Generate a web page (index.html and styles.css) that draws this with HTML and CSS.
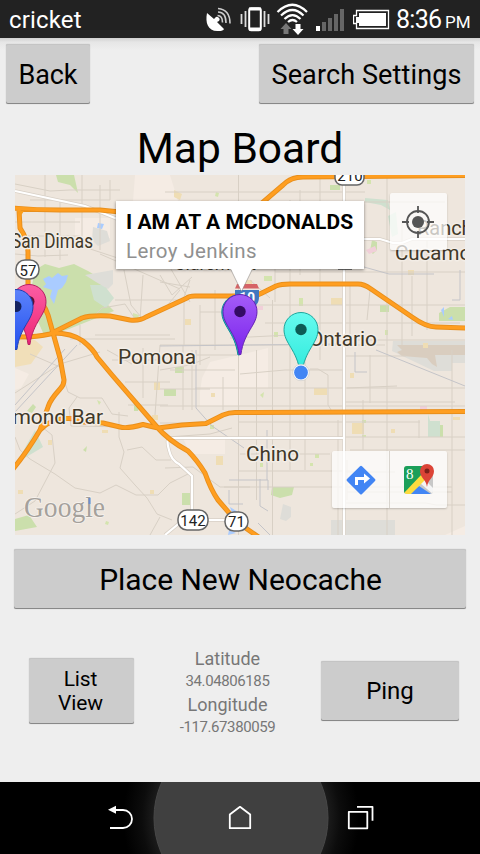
FILE: index.html
```html
<!DOCTYPE html>
<html lang="en">
<head>
<meta charset="utf-8">
<title>Map Board</title>
<link rel="stylesheet" href="styles.css">
</head>
<body>
<div class="phone">
  <header class="status">
    <span class="carrier">cricket</span>
    <div class="status-icons">
      <svg width="28" height="30" viewBox="205 4 28 30"><path d="M207 13C205 23 208 32 219 31Q223 31 224 29L217 22L219 21A2 2 0 1 0 215 18L214 19Z" fill="#fff"/><path d="M217.500 15.500q5 0 5 7M218 12q8 0 8 11M218 8.500q12 1 12 15" fill="none" stroke="#ccc" stroke-width="1.600"/></svg>
      <svg width="30" height="30" viewBox="240 4 30 30"><rect x="249.200" y="8.200" width="11.600" height="22" rx="2" fill="none" stroke="#fff" stroke-width="2"/><path d="M249 9h12M249 29h12" stroke="#fff" stroke-width="3"/><path d="M245.500 11v16M264.500 11v16M241.500 14v10M268.500 14v10" stroke="#ddd" stroke-width="1.800"/></svg>
      <svg width="34" height="34" viewBox="275 2 34 34"><g fill="none" stroke="#fff" stroke-width="2.200"><path d="M277.500 12Q292.500-2.500 307 12"/><path d="M281 15.500Q292.500 4.500 303.500 15.500"/><path d="M284.500 19Q292.500 11 300.500 19"/><path d="M288 22Q292.500 18 297 22"/></g><path d="M286 23l5.500 6h-3v5h-5v-5h-3z" fill="#777"/><path d="M298 35l5.500-6h-3v-5h-5v5h-3z" fill="#fff"/></svg>
      <svg width="30" height="30" viewBox="315 4 30 30"><path d="M316 26h4v5h-4z" fill="#fff"/><path d="M322 22h4v9h-4zM328 18h4v13h-4zM334 14h4v17h-4zM340 9h4v22h-4z" fill="#666"/></svg>
      <svg width="37" height="30" viewBox="353 4 37 30"><path d="M356.500 10.500h32v18h-32v-5h-3v-8h3z" fill="none" stroke="#fff" stroke-width="1.300"/><path d="M359 13h27v13h-27v-3h-3v-6h3z" fill="#fff"/></svg>
    </div>
    <span class="time">8:36 <small>PM</small></span>
  </header>

  <main class="app">
    <nav class="top-bar">
      <button class="btn back"><span>Back</span></button>
      <button class="btn search"><span>Search Settings</span></button>
    </nav>
    <h1 class="title"><span>Map Board</span></h1>

    <section class="map">
      <svg class="map-art" width="450" height="360" viewBox="15 175 450 360">
        <defs>
          <linearGradient id="gp" x1="0" y1="0" x2="0" y2="1"><stop offset="0" stop-color="#a45cf8"/><stop offset="1" stop-color="#7a22ec"/></linearGradient>
          <linearGradient id="gc" x1="0" y1="0" x2="0" y2="1"><stop offset="0" stop-color="#66fbef"/><stop offset="1" stop-color="#2fe9dc"/></linearGradient>
          <linearGradient id="gk" x1="0" y1="0" x2="0" y2="1"><stop offset="0" stop-color="#fb5ea3"/><stop offset="1" stop-color="#ee2478"/></linearGradient>
          <linearGradient id="gb" x1="0" y1="0" x2="0" y2="1"><stop offset="0" stop-color="#5c83fa"/><stop offset="1" stop-color="#2350ee"/></linearGradient>
          <path id="pin" d="M0-17A17 17 0 0 1 17 0C17 14 4 20 .9 43H-.9C-4 20-17 14-17 0A17 17 0 0 1 0-17Z"/>
        </defs>
        <rect x="15" y="175" width="450" height="360" fill="#eee6dd"/>

        <!-- built-up areas -->
        <g fill="#f5ece4">
          <path d="M135 175h35l8 26h-45zM75 218h35v20H75zM210 362l58-14v40h-28v18h-40v-14l2-14z"/>
          <path d="M183 438h42v16h-35zM15 368l14 6-8 14-6 2zM445 535l20-9v9z"/>
        </g>
        <path d="M15 340l20 0 8 7-12 17-16 3z" fill="#f1dfb9"/>

        <!-- parks and water -->
        <g fill="#cbdfac">
          <path d="M35 270l10-6 14 4 15-4 14 7 20 12-5 17 11 11-25 10-20 8-24 8-10-22-5-20z"/>
          <path d="M56 175h18l4 18-8-8-12-3zM272 487h22l-2 8-12 3-9-3zM439 313l11-6h15v14h-26zM164 389h12v7h-12zM175 367h9v6h-9zM182 493h8v12h-8zM372 240l5 2v8l-4 4-3-3zM380 305h9v7h-9zM330 185h10v5h-10zM27 411l6-7 3 3-4 6zM83 450l4-4-1 6zM134 402l6 2-2 7h-4zM440 425h3v12h-3zM15 519l14-4 8 12-22 4z"/>
        </g>
        <g fill="#cfe0cf">
          <path d="M90 285l14 0 10 13-8 10-12-8zM26 446l9-16 8 17-25 15zM428 414l2 7h10v16h-12zM365 198l23 2 2 10-9-5-16-3zM388 216l8-4 2 22-6 3z"/>
        </g>
        <g fill="#aaccff"><path d="M43 279l6-3 3 2 6-5 4 3 6-1-2 7-4 6-4 2-4 14-4-7 2-7-9-3 3-3zM98 223l6 1-2 5-5-1zM441 310l3-3v10zM448 319l4-3 1 4zM230 507l8 5-5 4zM229 530l7 3-8 2z"/></g>
        <g fill="#deddd8">
          <path d="M93 227l14 4 3 10-12 5-6-6zM85 275l28-5v14l-5 5-12-7zM393 341h72v22h-13v8h-18l-42-20zM331 520h64v15h-64zM283 504l8 3v10l-5 4-6-2z"/>
        </g>
        <path d="M397 345h68v10h-30l2 12-5-3-5-6-25-2-5-4 5-2z" fill="#d9cdbf"/>
        <g fill="#efddb4">
          <path d="M352 423h12v11h-12zM216 456h7v9h-7zM331 298h11v7h-11zM314 388h13v7h-13zM174 190l8 4-2 6-6-3zM154 382h6v8h-6zM152 415h6v5h-6zM185 319h6v6h-6zM243 318h5v7h-5zM211 393h4v4h-4zM350 373h4v5h-4zM453 417h7v3h-7zM391 429h4v4h-4zM245 280h7v5h-7zM295 450h4v4h-4zM18 490h5v4h-5zM150 490h4v4h-4zM48 440h4v5h-4zM423 343h5v5h-5zM408 270h6v5h-6zM102 430h6v3h-6z"/>
        </g>
        <g fill="#d4e4ae"><path d="M264 276h8v5h-8zM274 332h4v5h-4zM260 395l4-3-1 6zM216 192l3 1-1 4-3-1zM299 298h4v8h-4zM315 454h4v4h-4zM367 180h4v4h-4zM362 420h4v3h-4zM362 435h4v2h-4zM310 463h3v3h-3zM260 463h3v4h-3zM210 425h4v4h-4zM133 313l6 2-1 5-5-3zM97 400l4 2-2 3zM106 521l3 1-1 3-3-1zM385 330h3v5h-3z"/></g>
        <path d="M366 250l9-4 2 5-8 3zM420 406h7v4h-7zM255 306h8v4h-8z" fill="#f1cfd9"/>

        <!-- minor streets -->
        <g class="street">
          <path d="M238.500 175V535M290 200V470M320 175V360M272.500 300V535M256.500 350V500M184 300V345M223 377V410M305 350V470M338 420V535M363 400V450M387 175V535M419 420V438M452 350V535M370 355V403M402 220V345M427 225V330M192 350V410"/>
          <path d="M160 345h225M160 406H465M195 388H465M238 422H420M338 437H465M240 454H330M238 471H350M224 487H452M275 272H465M350 202H445M165 192H365M250 305H465M265 323H460M348 340H465M346 356h60M345 402h110M345 472h50M346 503h80l10 2h29M200 312h42M240 374l45-4h60M347 492h105M350 450h115"/>
          <path d="M15 222h65M15 254l23 2 30-1M45 175v82M60 200v60M82 175V240M100 185V250M110 180v20M15 184l35 7 20-1M70 190h50M30 200h80M28 236h52M78 245l55 18M100 254l80 35M124 270l7 35 10 12M160 275l12 20 20-18M143 275l-3 45M180 290l-18 22M115 300h68l7-20"/>
          <path d="M90 320l12-12 23-4 10 15M95 335H170M70 339h105M80 325v20M107 350l25 14M143 348v50M160 345l-5 70M112 360h50M125 382h45M128 405h40M183 345v65M197 355h40M170 370h65M15 393l45-29 40-12M30 354l30 13 8 25 12 6 22 0 10 16 16 2M77 397l-8 11 2 18 60 1M15 437l5 13 10 9 25 15 20 14 25 5 16-8 20 10 22 0 12-12 20-10M15 514l20-13 20-38-3-28-10-8M119 412v25l5 15-4 16 15 17 12 13 10 16 15 6M127 450l15-3 14 13h15M150 535l10-18"/>
          <path d="M160 370l30-5 20-8M160 389h50M160 423h47M165 468l28-1 27 20h30M168 437l42-3 22-6M230 338l60-3h40M215 290v60M200 305v60M160 250l30 52M160 282l30 5M275 202v100M300 190v85M250 280l20 18M412 276v60M350 284v50M370 290l-3 30M310 369h8l10 6v30l5 8M347 388l50-2M347 460v40"/>
        </g>
        <g class="rail">
          <path d="M15 412l62-67M15 405l50-56M196 350v58l16 18 32 22M160 346l180-2M364 267l25 7h45M376 350l89 36M355 352v20h12M229 480h39v10M267 480v-50M229 490v14h14M260 479v27l8 5M258 523l12 12M460 270v30h-8"/>
        </g>

        <!-- secondary roads -->
        <g class="white-casing"><path d="M15 191l70 15 45 18M364 239h16l13 4h9l10-4h53M344 175V535M344 438H169q-3 2 0 12 2 10 10 14l13 12v44M207 520h25M182 521l-17 14"/></g>
        <g class="white-road"><path d="M15 191l70 15 45 18M364 239h16l13 4h9l10-4h53M344 175V535M344 438H169q-3 2 0 12 2 10 10 14l13 12v44M207 520h25M182 521l-17 14"/></g>

        <!-- freeways -->
        <g class="fw-casing">
          <path id="freeways" d="M13 208Q35 210 60 210H100L130 213M255 209L283 185Q291 177 303 177L465 175.500M19 210L20 228Q28 240 28 252V285Q44 303 48 315L60 358L64 380Q64 385 60 389Q50 400 48 407L40 430Q27 452 13 469M20 337Q38 337 50 334L82 318Q90 315 110 316L130 320Q140 321 146 317L187 298Q189 296 195 296H240Q255 297 262 293L276 286Q281 284 290 284H358Q364 284 371 289L412 317Q426 327 436 327L467 328M53 333Q72 333 83 341Q94 350 97 357L112 375L157 427Q168 440 188 451Q197 460 205 473Q211 490 218 500L237 522L260 538M40 430Q50 419 66 418.500Q76 418 84 422L103 423L120 427Q127 429 143 424.500L158 428L182 425L206 423.500L223 415Q229 412.500 235 412.500L467 411.500"/>
        </g>
        <use href="#freeways" class="fw"/>
        <path d="M17 211h7l-4 6z" fill="#f99d1c"/>

        <!-- place labels -->
        <g class="place">
          <text x="11" y="248" font-size="19.500" textLength="82" lengthAdjust="spacingAndGlyphs">San Dimas</text>
          <text x="118" y="364" font-size="20.500" textLength="78" lengthAdjust="spacingAndGlyphs">Pomona</text>
          <text x="1" y="424" font-size="20.500" textLength="102" lengthAdjust="spacingAndGlyphs">amond Bar</text>
          <text x="246" y="461" font-size="20.500" textLength="53" lengthAdjust="spacingAndGlyphs">Chino</text>
          <text x="309" y="346" font-size="20.500" textLength="68" lengthAdjust="spacingAndGlyphs">Ontario</text>
          <text x="417" y="235" font-size="20.500" textLength="67" lengthAdjust="spacingAndGlyphs">Rancho</text>
          <text x="395" y="260" font-size="20.500" textLength="110" lengthAdjust="spacingAndGlyphs">Cucamonga</text>
          <text x="174" y="270" font-size="20.500" textLength="82" lengthAdjust="spacingAndGlyphs">Claremont</text>
        </g>

        <!-- route shields -->
        <g class="shield">
          <rect x="16" y="260" width="23" height="19" rx="9"/><text x="28" y="275.500">57</text>
          <rect x="335" y="168" width="29" height="17" rx="7"/><text x="350" y="181">210</text>
          <rect x="178" y="510" width="30" height="20" rx="9"/><text x="193" y="525.500">142</text>
          <rect x="225" y="512" width="23" height="19" rx="9"/><text x="236.500" y="527">71</text>
        </g>
        <path d="M338 268.500h14" stroke="#555" stroke-width="2.500"/>
        <path d="M237 284h20l2 4.500h-24z" fill="#d66365"/>
        <path d="M235 290h24v7c0 8-5 10-12 13c-8-3-12-5-12-13z" fill="#4078c0"/>
        <text x="247" y="302.500" class="route10">10</text>

        <!-- cache pins -->
        <g transform="translate(29 301.500)"><use href="#pin" fill="url(#gk)" stroke="#b51f63"/><circle r="5.500" fill="#5c1030"/></g>
        <g transform="translate(16 306.500)"><use href="#pin" fill="url(#gb)" stroke="#203fae"/><circle r="5.500" fill="#14225e"/></g>
        <g transform="translate(239.500 311.500)"><use href="#pin" fill="#28bdc6" stroke="#168b98" x="-.7" y=".4"/><use href="#pin" fill="url(#gp)" stroke="#6522b4" x=".5"/><circle r="5.700" cx=".5" fill="#340c64"/></g>
        <g transform="translate(301 329.500)"><use href="#pin" fill="url(#gc)" stroke="#1fa69d"/><circle r="5.700" fill="#0d5b55"/></g>
        <circle cx="301" cy="372.500" r="8.200" fill="#fff" stroke="#bbb" stroke-width=".5"/><circle cx="301" cy="372.500" r="6.900" fill="#4285f4"/>

        <text x="24" y="517" class="google" textLength="81" lengthAdjust="spacingAndGlyphs">Google</text>
        <path d="M89.500 498v6" stroke="#6b8fd0" stroke-width="2"/>
      </svg>

      <div class="info">
        <strong>I AM AT A MCDONALDS</strong>
        <span>Leroy Jenkins</span>
        <svg class="info-tip" width="22" height="23" viewBox="0 0 22 23"><path d="M0 0L10.500 22 21 0z" fill="#fff"/><path d="M0 1L10.500 22.500 21 1" fill="none" stroke="#888" stroke-opacity=".5"/></svg>
      </div>
      <div class="locate">
        <svg width="34" height="34" viewBox="401 205 34 34"><g fill="none" stroke="#555" stroke-width="1.800"><circle cx="418" cy="222" r="11"/><path d="M418 206v7M418 231v7M402 222h7M427 222h7"/></g><circle cx="418" cy="222" r="6" fill="#555"/></svg>
      </div>
      <div class="links">
        <div class="link">
          <svg width="32" height="32" viewBox="0 0 32 32"><path d="M15 2.200Q16 1.200 17 2.200L30 15Q31 16 30 17L17 30Q16 31 15 30L2 17Q1 16 2 15Z" fill="#4285f4"/><path d="M11.500 21v-6.500h9" fill="none" stroke="#fff" stroke-width="3"/><path d="M19 9.500l6 5-6 5z" fill="#fff"/></svg>
        </div>
        <div class="link">
          <svg width="34" height="34" viewBox="402 463 34 34"><clipPath id="tile"><rect x="404" y="466" width="29" height="28" rx="3"/></clipPath><g clip-path="url(#tile)"><path d="M404 466h29v28h-29z" fill="#c8c8c8"/><path d="M404 466h27l-27 28z" fill="#1b9f59"/><path d="M419 486l-10 8h22z" fill="#4285f4"/><path d="M420 483l4-4 10 10v6z" fill="#f5f5f5"/><path d="M404 493l18-19 5 4-17 17h-6z" fill="#fddb3e"/></g><path d="M427 487c-1-8-7-9-7-16a7 7 0 0 1 14 0c0 7-6 8-7 16z" fill="#dc4437"/><circle cx="427" cy="471" r="2.500" fill="#7d211a"/><text x="406" y="479" class="tile-g">8</text></svg>
        </div>
      </div>
    </section>

    <button class="btn place-new"><span>Place New Neocache</span></button>

    <section class="bottom">
      <button class="btn list"><span>List<br>View</span></button>
      <div class="coords">
        <span class="coord-name">Latitude</span>
        <span class="coord-value">34.04806185</span>
        <span class="coord-name">Longitude</span>
        <span class="coord-value">-117.67380059</span>
      </div>
      <button class="btn ping"><span>Ping</span></button>
    </section>
  </main>

  <footer class="navbar">
    <svg width="480" height="72" viewBox="0 782 480 72">
      <defs><radialGradient id="glow" gradientUnits="userSpaceOnUse" cx="241" cy="818" r="118"><stop offset=".72" stop-color="#1e1e1e"/><stop offset=".84" stop-color="#0c0c0c"/><stop offset="1" stop-color="#000"/></radialGradient></defs>
      <path d="M0 782h480v72H0z" fill="#000"/><circle cx="241" cy="818" r="118" fill="url(#glow)"/>
      <circle cx="241" cy="818" r="87" fill="#404040" stroke="#484848"/>
      <g fill="none" stroke="#fff" stroke-width="1.800"><path d="M113 810h10a9 9 0 0 1 0 18h-13"/><path d="M229.800 814.500L240 806.800l10.200 7.700v13.700h-20.400z" stroke-linejoin="round"/><path d="M348.800 811.800h18.500v16.500h-18.500zM357 806.800h15.500v14" stroke-linejoin="round"/></g>
      <path d="M108 809.800l8-4v8z" fill="#fff"/>
    </svg>
  </footer>
</div>
</body>
</html>
```
FILE: styles.css
```css
* { box-sizing: border-box; }
body { margin: 0; font-family: Roboto, "Liberation Sans", sans-serif; background: #eee; }
.phone { width: 480px; height: 854px; display: flex; flex-direction: column; overflow: hidden; }
svg { display: block; flex: none; }

.status { height: 38px; flex: none; background: #222; color: #fff; display: flex; align-items: center; padding: 0 9px; white-space: nowrap; }
.carrier { font-size: 24px; letter-spacing: .15px; line-height: 38px; padding-top: 1px; }
.status-icons { margin-left: auto; display: flex; align-items: center; gap: 6px; }
.status-icons svg:nth-child(1) { margin-right: 1px; }
.status-icons svg:nth-child(2) { margin-right: -1px; }
.status-icons svg:nth-child(4) { margin-right: 2px; }
.time { width: 75px; margin-left: 6px; font-size: 25px; letter-spacing: -.7px; line-height: 36px; padding-top: 4px; }
.time small { font-size: 17px; letter-spacing: 0; margin-left: -2px; }

.app { height: 744px; flex: none; background: linear-gradient(#d0d0d0, #e6e6e6 4px, #eee 12px); }
.top-bar { display: flex; justify-content: space-between; padding: 6px 6px 0; }
.btn { font-family: inherit; color: #000; background: #ccc; border: 0; border-radius: 2px; padding: 0; display: flex; align-items: center; justify-content: center; text-align: center; white-space: nowrap; box-shadow: inset 0 1px #c4c4c4, inset 0 -1px #888, 0 0 1px #aaa; }
.btn span { padding-top: 1px; }
.back { width: 84px; height: 60px; font-size: 27px; letter-spacing: -.1px; }
.search { width: 215px; height: 60px; font-size: 27px; }
.search span { letter-spacing: .12px; }
.title { margin: 0; height: 71px; padding-top: 17px; font-size: 42.5px; font-weight: 400; line-height: 56px; text-align: center; }

.map { position: relative; width: 450px; height: 360px; margin: 0 15px; overflow: hidden; }
.street { fill: none; stroke: #d8d0c5; stroke-width: 1; }
.rail { fill: none; stroke: #c4c4c8; stroke-width: 1; }
.white-casing { fill: none; stroke: #d8d0c6; stroke-width: 3.6; }
.white-road { fill: none; stroke: #fff; stroke-width: 2.2; }
.fw-casing { fill: none; stroke: #e88f1c; stroke-width: 5; stroke-linejoin: round; }
.fw { fill: none; stroke: #ff9e20; stroke-width: 3.2; stroke-linejoin: round; }
.place { fill: #403828; stroke: #f3ede6; stroke-width: 3; stroke-linejoin: round; paint-order: stroke; }
.shield rect { fill: #fff; stroke: #666; stroke-width: 1.5; }
.shield text { font-size: 15px; text-anchor: middle; fill: #222; }
.route10 { font-size: 14px; font-weight: 700; text-anchor: middle; fill: #fff; }
.google { font-family: "Liberation Serif", serif; font-size: 29px; fill: #a5a19c; stroke: #f8f4ef; stroke-width: 1.5; paint-order: stroke; }
.tile-g { font-family: "Liberation Serif", serif; font-size: 15px; fill: #fff; }
.info { position: absolute; left: 101px; top: 26px; width: 248px; height: 68px; padding: 9px 10px; background: #fff; box-shadow: 0 1px 3px rgba(0,0,0,.45); white-space: nowrap; }
.info strong { display: block; font-size: 21px; line-height: 25px; font-weight: 700; letter-spacing: .05px; }
.info span { display: block; margin-top: 3px; font-size: 20.5px; letter-spacing: .4px; line-height: 26px; color: #909090; }
.info-tip { position: absolute; left: 115px; top: 67.500px; }
.locate, .links { position: absolute; background: rgba(255,255,255,.72); border-radius: 2px; box-shadow: 0 1px 2px rgba(0,0,0,.2); display: flex; align-items: center; justify-content: center; }
.locate { left: 375px; top: 18px; width: 57px; height: 57px; }
.locate svg { margin-left: -1px; }
.links { left: 317px; top: 276px; width: 115px; height: 57px; }
.link { flex: 1; height: 57px; display: flex; align-items: center; justify-content: center; }
.link + .link { border-left: 1px solid #d8d4ce; }

.place-new { width: 452px; height: 60px; margin: 14px 14px 0; font-size: 30px; }
.place-new span { letter-spacing: -.04px; padding-left: 1px; }
.bottom { display: flex; align-items: flex-start; padding: 38px 21px 0 29px; }
.list { width: 105px; height: 66px; margin-top: 11px; font-size: 21px; line-height: 24px; letter-spacing: -.1px; padding-right: 2px; }
.list span, .ping span { padding: 0 0 1px; }
.coords { width: 187px; display: flex; flex-direction: column; align-items: center; color: #777; }
.coord-name { font-size: 18px; line-height: 24px; }
.coord-value { font-size: 15px; line-height: 22px; letter-spacing: -.4px; margin-top: -1px; margin-bottom: 1px; }
.ping { width: 138px; height: 60px; margin-top: 14px; font-size: 24px; }
.navbar { height: 72px; flex: none; }
```
